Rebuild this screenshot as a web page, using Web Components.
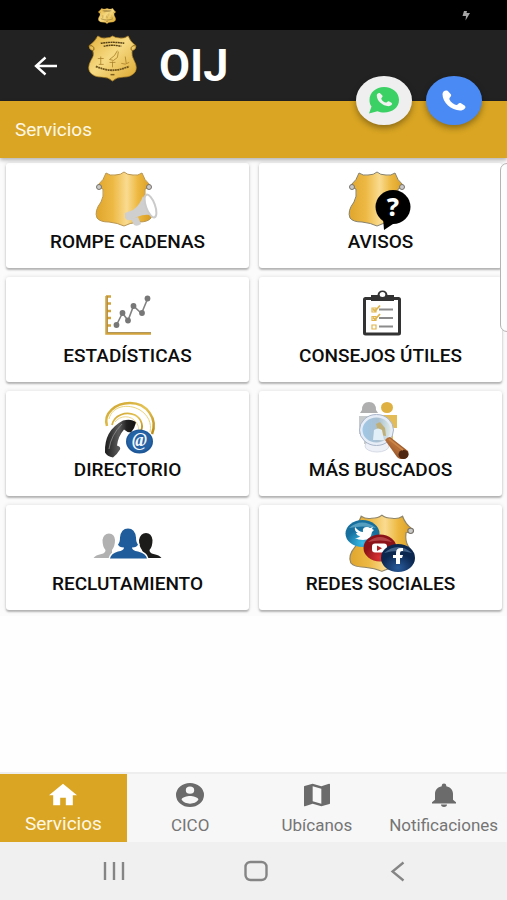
<!DOCTYPE html>
<html lang="es">
<head>
<meta charset="utf-8">
<meta name="viewport" content="width=device-width, initial-scale=1">
<title>OIJ - Servicios</title>
<style>
  html, body { margin: 0; height: 100%; }
  body {
    --gold: #d9a522;
    --dark: #222222;
    font-family: Roboto, "Liberation Sans", sans-serif;
    background: #fefefe;
  }
</style>
</head>
<body>
<oij-app></oij-app>

<script>
const gold = `<linearGradient id="g"><stop offset="0" stop-color="#e0a52c"/><stop offset=".3" stop-color="#edb944"/><stop offset=".55" stop-color="#f9db90"/><stop offset=".75" stop-color="#edb840"/><stop offset="1" stop-color="#d69a20"/></linearGradient>`;

const shield = (line = '#8f7d58') => `
  <path d="M28 6Q32 9 37 8Q43 8 46 5Q49 8 55 8Q60 9 64 6Q66 13 72 18Q69 22 67 22Q66 30 69 35Q76 44 73 51Q70 55 61 55Q51 56 46 59Q40 56 31 55Q22 55 19 51Q16 44 23 35Q26 30 25 22Q23 22 20 18Q26 13 28 6Z" fill="url(#g)" stroke="${line}"/>
  <circle cx="21" cy="20" r="2.500" fill="#c9c9c9" stroke="#77736b"/><circle cx="71" cy="20" r="2.500" fill="#c9c9c9" stroke="#77736b"/>`;

const phone = 'M2 5C2 2 5 0 7.500 1.500L10.500 5C12 7.500 8.500 8.500 9 10.500C10.500 14 13.500 16 16 16.500C18 16.500 18.500 13.500 20.500 14.500L24.500 17C27 19 24 22.500 20 22.500C11 22 2 14 2 5Z';

const svg = (w, h, body, box = `0 0 ${w} ${h}`) =>
  `<svg width="${w}" height="${h}" viewBox="${box}" preserveAspectRatio="none" aria-hidden="true">${body}</svg>`;

const icons = {
  back: svg(24, 20, `<path d="M23 10H2M11.500 1.500L2 10l9.500 8.500" fill="none" stroke="#fff" stroke-width="2.400"/>`),

  crest: (w, h) => svg(w, h, `
    <defs><linearGradient id="c" x2="1" y2="1"><stop offset="0" stop-color="#e3b23c"/><stop offset=".45" stop-color="#f6da83"/><stop offset="1" stop-color="#dba62c"/></linearGradient></defs>
    <path d="M10 1Q14 4 18 3Q23 3 25 1Q28 3 32 3Q37 4 41 1Q43 7 49 11Q49 15 45 16Q44 21 47 26Q51 33 48 38Q44 43 36 43Q29 43 25 47Q21 43 14 43Q6 43 2 38Q-1 33 3 26Q7 21 5 16Q1 15 1 11Q7 7 10 1Z" fill="url(#c)" stroke="#b88a26" stroke-width=".7"/>
    <path d="M1 11q4-1 5 2t-2 3M49 11q-4-1-5 2t2 3" fill="none" stroke="#8c6818"/>
    <path d="M13 8.500q12-2 24 0M16 11.500q9-2 18 0" fill="none" stroke="#584316" stroke-width="1.500" stroke-dasharray="2 .5"/>
    <path d="M8 32q9 4 17 4t17-4" fill="none" stroke="#6e541b" stroke-width="1.800" stroke-dasharray="2 .5"/>
    <path d="M30 16l-3 5-5 4 4 1 4-3 1-6M13 22v8M10 24h6M11 30h5M25 27v6M22 28h6M38 22l1 7M34 29q4 2 8-1" fill="none" stroke="#a67d28" stroke-width=".8"/>
    <path d="M23 40.500h4" stroke="#7b5d20" stroke-width="1.500"/>`, '0 0 50 48'),

  whatsapp: svg(30, 27, `
    <path d="M15 0C23.500 0 30 5.500 30 13S23.500 25.500 15 25.500c-2.500 0-4.500-.5-6.500-1.300L0 26.500l2.500-7C1 17.500.5 15.500.5 13 .5 5.500 7 0 15 0z" fill="#3bd164"/>
    <path transform="translate(6.500 5.500) scale(.65 .61)" d="${phone}" fill="#f2f2f2"/>`),
  call: svg(24, 21, `<path d="${phone}" fill="#fff"/>`, '1.500 .5 24.500 22.500'),
  bolt: svg(8, 12, `<path d="M2 1h3L4.500 3h3.500L3.500 10.500 4 6H.5z" fill="#a4a4a4"/>`),

  chain: svg(100, 64, `<defs>${gold}</defs>${shield('#b9954f')}
    <g fill="#cfcfcf"><path d="M47 46l8-3q7-5 10-14l11 20q-8-3-17 1l-6 3q-4 1-6-2z"/><path d="M53 52l7-2 3 7q-4 3-7 1z"/></g>
    <ellipse cx="72.500" cy="39" rx="4.500" ry="12" transform="rotate(-20 72.500 39)" fill="#fff" stroke="#cbcbcb" stroke-width="2"/>`),

  notices: svg(100, 64, `<defs>${gold}</defs>${shield('#85816f')}
    <ellipse cx="62" cy="40" rx="17.500" ry="17" fill="#000"/><path d="M52 51l1 12 12-8z" fill="#000"/>
    <text x="62" y="49" text-anchor="middle" font-family="Noto Sans, sans-serif" font-weight="800" font-size="25" fill="#fff">?</text>`),

  stats: svg(100, 64, `
    <path d="M28.500 15v37.500H73M28 15.500h5M28 22.500h5M28 30h5M28 37h5M28 44.500h5" fill="none" stroke="#d2a33b" stroke-width="2.500"/>
    <path d="M29.500 15v36.500H73" fill="none" stroke="#9c8658" stroke-width=".7"/>
    <path d="M38.500 44l6-12 5.500 7.500L55.500 25l8 7.500L69.500 18" fill="none" stroke="#828282" stroke-width="1.600"/>
    <g fill="#777"><circle cx="38.500" cy="44" r="2.900"/><circle cx="44.500" cy="32" r="2.900"/><circle cx="50" cy="39.500" r="2.900"/><circle cx="55.500" cy="25" r="2.900"/><circle cx="64" cy="32" r="2.900"/><circle cx="69.500" cy="17.500" r="2.900"/></g>`),

  tips: svg(100, 64, `
    <rect x="33.500" y="17.500" width="35" height="35.500" rx="1" fill="#fff" stroke="#333" stroke-width="3"/>
    <path d="M40 20v-6h6.500q.5-4.500 5-4.500t5 4.500H63v6z" fill="#333"/><ellipse cx="51.500" cy="13.500" rx="2.800" ry="2.500" fill="#fff"/>
    <path d="M48 28.500h14M48 37h14M48 45.500h14" stroke="#8b8b8b" stroke-width="2.200"/>
    <g fill="none" stroke="#dfb64f" stroke-width="1.200"><path d="M41 27h4v4h-4zM41 35.500h4v4h-4zM41 44h4v4h-4z"/><path d="M42 28l2 2 5-5.500M42 36.500l2 2 5-5.500" stroke-width="1.800"/></g>`),

  directory: svg(100, 64, `
    <defs><linearGradient id="r" y2="1"><stop offset="0" stop-color="#cda22c"/><stop offset=".5" stop-color="#e5c456"/><stop offset="1" stop-color="#b98a17"/></linearGradient><linearGradient id="k"><stop offset="0" stop-color="#1c1c1c"/><stop offset=".45" stop-color="#5b5b5b"/><stop offset=".7" stop-color="#222"/><stop offset="1" stop-color="#111"/></linearGradient></defs>
    <g fill="none" stroke="url(#r)"><path d="M29 31C25 18 38 8 52 8c17 0 28 16 22 31" stroke-width="2.500"/><path d="M31 24C34 11 50 8 62 15c8 5 12 13 10 22" stroke="#ead37a" stroke-width="1"/><path d="M34 30C36 20 48 16 57 20c7 4 9 12 5 17" stroke-width="1.800"/><path d="M37 27C42 20 53 20 58 27c3 4 3 8 2 11" stroke="#e9cc70" stroke-width=".8"/></g>
    <path d="M45 25.500q9-2 13 2-1 5-5 10-4 0-7-3-6 7-7 16 4 1 3 4-3 5-7 8-6-1-8-5-1-22 18-32z" fill="url(#k)"/>
    <path d="M44 29q-11 11-13 25" fill="none" stroke="#929292" stroke-width=".8"/>
    <ellipse cx="61.500" cy="46.500" rx="13.500" ry="12" fill="#1e5797"/><ellipse cx="61.500" cy="46" rx="12" ry="10.500" fill="#2562a4"/>
    <text x="61.500" y="51" text-anchor="middle" font-family="Liberation Serif, serif" font-weight="700" font-style="italic" font-size="18" fill="#f4f8fc">@</text>`),

  wanted: svg(100, 64, `
    <defs><linearGradient id="w" x2="1"><stop offset="0" stop-color="#9fc9e8"/><stop offset=".55" stop-color="#a9bfd1"/><stop offset="1" stop-color="#e4efe9"/></linearGradient><linearGradient id="h" x2="1" y1="1"><stop offset="0" stop-color="#6d3715"/><stop offset=".5" stop-color="#b76f39"/><stop offset="1" stop-color="#5e2d11"/></linearGradient></defs>
    <path d="M29 18l2-3q0-8 7-8t7 8l2 3z" fill="#afafaf"/><path d="M28 21h20v28H33V39h-5z" fill="#c8cbcc"/>
    <ellipse cx="56" cy="12.500" rx="6" ry="5.500" fill="#dfb143"/><path d="M50 20h16v13h-4v15H49z" fill="#e3bb57"/>
    <ellipse cx="46" cy="51" rx="12" ry="6" fill="#edf0f7" stroke="#d7dbe5"/>
    <ellipse cx="45.500" cy="35" rx="15.500" ry="14" fill="url(#w)" stroke="#e7edf7" stroke-width="3"/>
    <ellipse cx="45.500" cy="35" rx="17" ry="15.500" fill="none" stroke="#a9b6ca"/>
    <path d="M45 29l4-2 5 6 1 8-7-1z" fill="#c0b078"/><path d="M42 45l1-10q4-3 8 0l2 10z" fill="#e2eef8"/>
    <path d="M54 45q2-3 5-3l18 14q2 6-4 8-4 1-7-2z" fill="url(#h)"/><ellipse cx="72.500" cy="59.500" rx="5" ry="4.500" fill="#4f2610"/><path d="M58 44l14 11" stroke="#ca8548" stroke-width="2"/>`),

  recruit: svg(100, 64, `
    <path d="M15.500 49q2-3 8-4 4-1 4-4-3-3-3-10 1-6.500 6.500-6.500T37 31q0 6-3 10v8z" fill="#b1b1b1"/>
    <path d="M83.500 49q-2-3-8-4-4-1-4-4 3-3 3-10-1-7-6.500-7T61 31q0 6 3 10 1 3 2 8z" fill="#1c1c1a"/>
    <path id="p" d="M32 49.500q1-5 8-7 6-1 6-4-5 0-6-3 2-2 2-7 1-9 8-9t8 9q0 5 2 7-1 3-6 3 0 3 6 4 8 2 9 7z" fill="#1f5c9c" stroke="#fff" stroke-width="3" paint-order="stroke"/>`),

  social: svg(100, 64, `
    <defs>${gold}
      <radialGradient id="tw" cy=".85"><stop offset="0" stop-color="#37bce8"/><stop offset="1" stop-color="#176f9e"/></radialGradient>
      <radialGradient id="yt" cy=".85"><stop offset="0" stop-color="#df3434"/><stop offset="1" stop-color="#8b1218"/></radialGradient>
      <radialGradient id="fb" cy=".85"><stop offset="0" stop-color="#285b9b"/><stop offset="1" stop-color="#0b2750"/></radialGradient></defs>
    <g transform="translate(-2 1) scale(1.150 1.040)">${shield('#8f8569')}</g>
    <ellipse cx="31.500" cy="24.500" rx="17" ry="13.500" fill="url(#tw)"/><path d="M18 19q13-11 27 0-13-3-27 0z" fill="#a5d9ec" opacity=".45"/>
    <path d="M24 18q4 5 8 5-1-5 4-5 2 0 3 1l3-1-1 2 2 1-2 2q-1 8-9 8-5 0-8-2 4 0 5-2-3 0-4-3h2q-4-2-3-6z" fill="#fff"/>
    <ellipse cx="49" cy="39" rx="16.500" ry="13.500" fill="url(#yt)"/><path d="M37 33q12-10 24 0-12-3-24 0z" fill="#ef8d8d" opacity=".4"/>
    <rect x="41" y="34.500" width="15" height="9" rx="3" fill="#fff"/><path d="M46 36.500v5.500l5-2.700z" fill="#b32024"/>
    <ellipse cx="67" cy="49" rx="17" ry="14" fill="url(#fb)"/><path d="M53 44q14-12 28 0-14-4-28 0z" fill="#86a8ce" opacity=".45"/>
    <path d="M65 55v-6h-3v-3h3v-2q0-5 5-5h2v3h-1q-2 0-2 2v2h3l-1 3h-2v6z" fill="#fff"/>`),

  home: svg(28, 23, `<path d="M10 20v-6h4v6h5v-8h3L12 3 2 12h3v8z" fill="#fff"/>`, '2 2.500 20 18'),
  user: svg(28, 24, `<path d="M12 2a10 10 0 100 20 10 10 0 000-20zm0 3a3 3 0 110 6 3 3 0 010-6zm0 14.200a7.200 7.200 0 01-6-3.220c.03-1.990 4-3.080 6-3.080s5.970 1.090 6 3.080a7.200 7.200 0 01-6 3.220z" fill="#6b6b6b"/>`, '2 2 20 20'),
  map: svg(26, 24, `<path d="M20.500 3l-.16.030L15 5.100 9 3 3.360 4.900A.5.5 0 003 5.380V20.500c0 .28.220.5.500.5l.16-.030L9 18.900l6 2.100 5.640-1.900a.5.5 0 00.36-.48V3.500a.5.5 0 00-.5-.5zM15 19l-6-2.110V5l6 2.110z" fill="#6b6b6b"/>`, '3 2.500 18 19'),
  bell: svg(24, 24, `<path d="M12 22a2 2 0 002-2h-4a2 2 0 002 2zm6-6v-5c0-3.070-1.640-5.640-4.500-6.320V4a1.500 1.500 0 00-3 0v.68C7.630 5.360 6 7.920 6 11v5l-2 2v1h16v-1z" fill="#6b6b6b"/>`, '4 2 16 20'),

  recents: svg(24, 22, `<path d="M3 2v18M12 2v18M21 2v18" stroke="#858585" stroke-width="2.400"/>`),
  homekey: svg(24, 22, `<rect x="1.500" y="2" width="21" height="18" rx="5" fill="none" stroke="#858585" stroke-width="2.400"/>`),
  backkey: svg(24, 22, `<path d="M17.500 2.500L6.500 11.500l11 9" fill="none" stroke="#858585" stroke-width="2.300"/>`)
};

function define(name, render) {
  customElements.define(name, class extends HTMLElement {
    constructor() {
      super();
      this.attachShadow({ mode: 'open' });
    }
    connectedCallback() {
      const template = document.createElement('template');
      template.innerHTML = render(this);
      this.shadowRoot.replaceChildren(template.content.cloneNode(true));
    }
  });
}

const reset = `*{box-sizing:border-box} svg{display:block} button{font:inherit;color:inherit;border:0;margin:0;padding:0;background:none;cursor:pointer}`;

define('oij-status-bar', () => `
  <style>${reset}
    :host{display:flex;justify-content:space-between;align-items:center;height:30px;padding:2px 37px 0 98px;box-sizing:border-box;background:#000}
  </style>${icons.crest(18, 16)}${icons.bolt}`);

define('oij-header', () => `
  <style>${reset}
    :host{display:flex;align-items:center;height:71px;padding-left:34px;background:var(--dark);color:#fff}
    .crest{margin:0 22px 14px 30px}
    h1{margin:0;font-size:45px;line-height:52px;font-weight:700}
  </style>
  <button aria-label="Volver">${icons.back}</button>
  <span class="crest">${icons.crest(49, 47)}</span>
  <h1><slot></slot></h1>`);

define('oij-section-bar', () => `
  <style>${reset}
    :host{display:block;position:relative;z-index:1;background:var(--gold);color:#fff8e6;box-shadow:0 2px 4px rgba(0,0,0,.3)}
    h2{margin:0;padding:17px 15px 16px;font-size:19px;line-height:24px;font-weight:400}
    .fabs{position:absolute;right:25px;top:-25px;display:flex;gap:14px}
  </style>
  <h2><slot></slot></h2>
  <div class="fabs"><slot name="actions"></slot></div>`);

define('oij-fab', el => `
  <style>${reset}
    :host{display:block}
    button{display:grid;place-items:center;width:56px;height:49px;border-radius:50%;background:${el.getAttribute('color')};box-shadow:0 3px 6px rgba(0,0,0,.35)}
  </style>
  <button aria-label="${el.getAttribute('label')}">${icons[el.getAttribute('icon')]}</button>`);

define('oij-card', el => `
  <style>${reset}
    :host{display:block}
    button{display:flex;flex-direction:column;align-items:center;width:100%;min-height:105px;padding:4px 0 14px;background:#fff;border-radius:3px;box-shadow:0 2px 2px rgba(0,0,0,.25),0 0 4px rgba(0,0,0,.12)}
    span{font-size:19px;line-height:22px;font-weight:500;color:#0d0d0d;white-space:nowrap}
  </style>
  <button>${icons[el.getAttribute('icon')]}<span><slot></slot></span></button>`);

define('oij-grid', () => `
  <style>${reset}
    :host{display:grid;grid-template-columns:1fr 1fr;gap:9px 10px;padding:5px 5px 6px 6px;background:#fbfbfb}
  </style><slot></slot>`);

define('oij-edge-panel', () => `
  <style>
    :host{position:absolute;right:-1px;top:5px;width:8px;height:169px;box-sizing:border-box;background:#fdfdfd;border:1px solid #b4b4b4;border-radius:7px 0 0 7px}
  </style>`);

define('oij-tab', el => `
  <style>${reset}
    :host{display:block;flex:1;min-width:0}
    button{display:flex;flex-direction:column;align-items:center;gap:7px;width:100%;height:68px;padding-top:9px;font-size:17px;line-height:22px;color:#757575}
    :host([active]) button{background:var(--gold);color:#fff8e6;font-size:19px}
  </style>
  <button ${el.hasAttribute('active') ? 'aria-current="page"' : ''}>${icons[el.getAttribute('icon')]}<span><slot></slot></span></button>`);

define('oij-tabs', () => `
  <style>${reset}
    :host{display:block}
    nav{display:flex;background:#f7f7f7;border-top:2px solid #eee}
  </style><nav><slot></slot></nav>`);

define('oij-system-nav', () => `
  <style>${reset}
    :host{display:block;background:#f0f0f0}
    nav{display:flex;justify-content:space-between;height:58px;padding:0 97px 0 102px;align-items:center}
  </style>
  <nav><button aria-label="Recientes">${icons.recents}</button><button aria-label="Inicio">${icons.homekey}</button><button aria-label="Atrás">${icons.backkey}</button></nav>`);

define('oij-app', () => `
  <style>${reset}
    :host{display:flex;flex-direction:column;min-height:100vh;overflow:hidden}
    main{position:relative;flex:1}
  </style>
  <oij-status-bar></oij-status-bar>
  <oij-header>OIJ</oij-header>
  <oij-section-bar>Servicios
    <oij-fab slot="actions" icon="whatsapp" color="#efefef" label="WhatsApp"></oij-fab>
    <oij-fab slot="actions" icon="call" color="#4a8af5" label="Llamar"></oij-fab>
  </oij-section-bar>
  <main>
    <oij-grid>
      <oij-card icon="chain">ROMPE CADENAS</oij-card>
      <oij-card icon="notices">AVISOS</oij-card>
      <oij-card icon="stats">ESTADÍSTICAS</oij-card>
      <oij-card icon="tips">CONSEJOS ÚTILES</oij-card>
      <oij-card icon="directory">DIRECTORIO</oij-card>
      <oij-card icon="wanted">MÁS BUSCADOS</oij-card>
      <oij-card icon="recruit">RECLUTAMIENTO</oij-card>
      <oij-card icon="social">REDES SOCIALES</oij-card>
    </oij-grid>
    <oij-edge-panel></oij-edge-panel>
  </main>
  <oij-tabs>
    <oij-tab icon="home" active>Servicios</oij-tab>
    <oij-tab icon="user">CICO</oij-tab>
    <oij-tab icon="map">Ubícanos</oij-tab>
    <oij-tab icon="bell">Notificaciones</oij-tab>
  </oij-tabs>
  <oij-system-nav></oij-system-nav>`);
</script>
</body>
</html>
